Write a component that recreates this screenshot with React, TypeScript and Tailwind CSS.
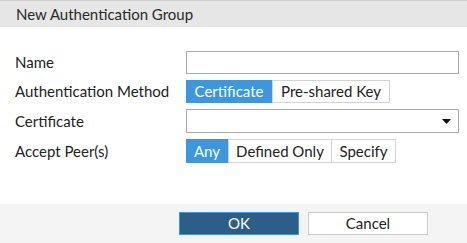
export default function App() {
  return (
    <div className="w-[467px] h-[243px] bg-white flex flex-col text-[#222] font-['Lato','Liberation_Sans',sans-serif] text-[15px]">
      <div className="h-[27px] shrink-0 bg-[#e6e6e6] border-t border-[#cfcfcf] flex items-center px-[16px] text-[15px] text-[#2a2a2a]">
        New Authentication Group
      </div>

      <div className="flex-1 flex flex-col pt-[24px] gap-[6px]">
        <div className="flex items-center h-[23px]">
          <div className="w-[186px] pl-[15px]">Name</div>
          <div className="w-[273px] h-[23px] border border-[#a9a9a9] bg-white"></div>
        </div>

        <div className="flex items-center h-[23px]">
          <div className="w-[186px] pl-[15px]">Authentication Method</div>
          <div className="flex h-[23px]">
            <div className="w-[86px] bg-[#3c97df] text-white flex items-center justify-center">Certificate</div>
            <div className="w-[118px] border border-[#d3d3d3] flex items-center justify-center">Pre-shared Key</div>
          </div>
        </div>

        <div className="flex items-center h-[24px]">
          <div className="w-[186px] pl-[15px]">Certificate</div>
          <div className="w-[273px] h-[24px] border border-[#a9a9a9] bg-white flex items-center justify-end pr-[7px]">
            <svg width="9" height="5" viewBox="0 0 9 5">
              <path d="M0 0 L9 0 L4.5 5 Z" fill="#111" />
            </svg>
          </div>
        </div>

        <div className="flex items-center h-[24px]">
          <div className="w-[186px] pl-[15px]">Accept Peer(s)</div>
          <div className="flex h-[24px]">
            <div className="w-[42px] bg-[#3c97df] text-white flex items-center justify-center">Any</div>
            <div className="w-[104px] border border-[#d3d3d3] flex items-center justify-center">Defined Only</div>
            <div className="w-[64px] border border-l-0 border-[#d3d3d3] flex items-center justify-center">Specify</div>
          </div>
        </div>
      </div>

      <div className="h-[39px] shrink-0 bg-[#f4f4f4] flex items-start pt-[8px] pl-[179px] gap-[9px]">
        <button className="w-[120px] h-[23px] bg-[#2c5e88] border border-[#3c97df] text-white text-[15px] flex items-center justify-center">
          OK
        </button>
        <button className="w-[120px] h-[23px] bg-white border border-[#cccccc] text-[#222] text-[15px] flex items-center justify-center">
          Cancel
        </button>
      </div>
    </div>
  );
}
